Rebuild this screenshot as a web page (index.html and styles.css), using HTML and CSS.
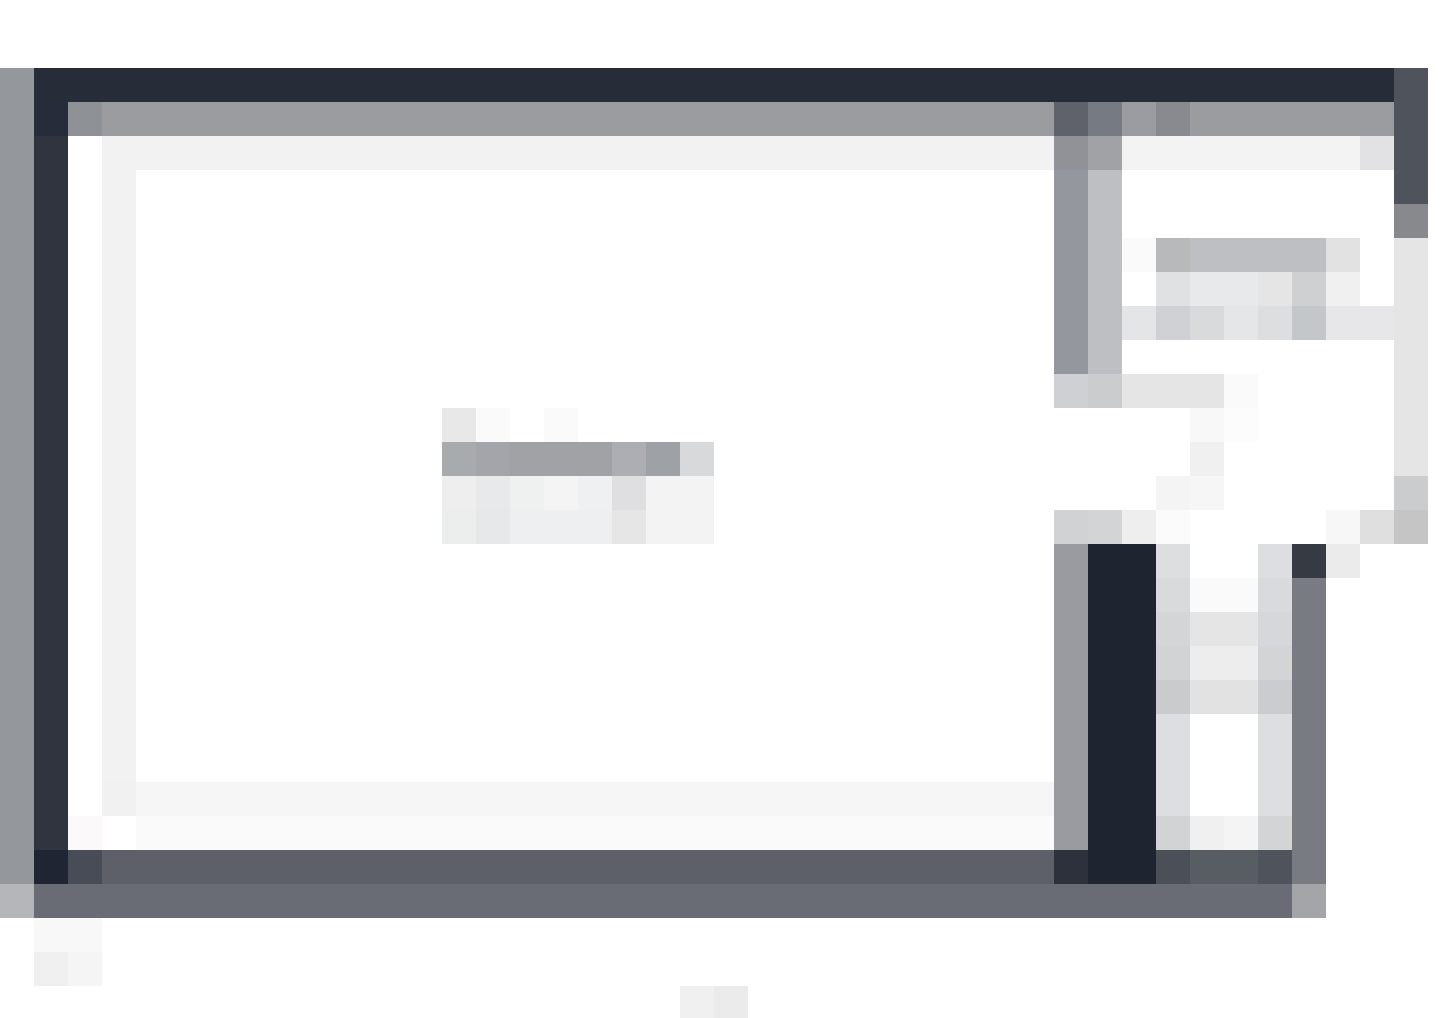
FILE: index.html
```html
<!DOCTYPE html>
<html lang="en">
<head>
<meta charset="utf-8">
<title>Pixelated interface</title>
<link rel="stylesheet" href="styles.css">
</head>
<body>
<main class="mosaic">
  <!-- outer frame -->
  <div class="r2 c0 h24 t-94979c"></div>
  <div class="r26 c0 t-b4b6ba"></div>
  <div class="r2 c1 w40 t-262d39"></div>
  <div class="r2 c41 h4 t-4f545c"></div>
  <div class="r6 c41 t-88898c"></div>
  <div class="r7 c41 h7 t-e5e5e6"></div>
  <div class="r14 c41 t-cbcccd"></div>
  <div class="r15 c41 t-c5c5c6"></div>
  <div class="r3 c1 t-272c3b"></div>
  <div class="r4 c1 h21 t-2f343f"></div>
  <div class="r25 c1 t-1f2533"></div>
  <div class="r26 c1 w37 t-696c74"></div>
  <div class="r26 c38 t-a3a5a8"></div>

  <!-- top strip -->
  <div class="r3 c2 t-8e9196"></div>
  <div class="r3 c3 w28 t-9a9ca0"></div>
  <div class="r3 c31 t-5f626b"></div>
  <div class="r3 c32 t-767a83"></div>
  <div class="r3 c33 t-9a9ca2"></div>
  <div class="r3 c34 t-888a8f"></div>
  <div class="r3 c35 w6 t-9a9ca0"></div>
  <div class="r4 c3 w28 t-f2f2f3"></div>
  <div class="r4 c31 t-909298"></div>
  <div class="r4 c32 t-a0a2a5"></div>
  <div class="r4 c33 w7 t-f3f3f3"></div>
  <div class="r4 c40 t-e2e2e4"></div>

  <!-- main panel edges -->
  <div class="r5 c3 h18 t-f2f2f3"></div>
  <div class="r23 c3 t-f1f1f2"></div>
  <div class="r23 c4 w27 t-f6f6f6"></div>
  <div class="r24 c2 t-fbf9f9"></div>
  <div class="r24 c4 w27 t-fafafa"></div>
  <div class="r25 c2 t-474c56"></div>
  <div class="r25 c3 w28 t-5d6068"></div>

  <!-- panel label -->
  <div class="r12 c13 t-e8e8e8"></div>
  <div class="r12 c14 t-fafafa"></div>
  <div class="r12 c16 t-fafafa"></div>
  <div class="r13 c13 t-a8abad"></div>
  <div class="r13 c14 t-a3a5aa"></div>
  <div class="r13 c15 w3 t-a0a2a6"></div>
  <div class="r13 c18 t-adaeb3"></div>
  <div class="r13 c19 t-9ea1a6"></div>
  <div class="r13 c20 t-d8d9db"></div>
  <div class="r14 c13 t-eeeeef"></div>
  <div class="r14 c14 t-e8e9ea"></div>
  <div class="r14 c15 t-eff0f0"></div>
  <div class="r14 c16 t-f4f4f4"></div>
  <div class="r14 c17 t-eff0f1"></div>
  <div class="r14 c18 t-dfdfe1"></div>
  <div class="r14 c19 w2 t-f3f3f3"></div>
  <div class="r15 c13 t-eceeee"></div>
  <div class="r15 c14 t-e7e8e9"></div>
  <div class="r15 c15 w3 t-eeeff0"></div>
  <div class="r15 c18 t-e6e6e7"></div>
  <div class="r15 c19 w2 t-f3f3f3"></div>

  <!-- divider, upper part -->
  <div class="r5 c31 h6 t-94979e"></div>
  <div class="r5 c32 h6 t-bdbfc3"></div>
  <div class="r11 c31 t-cfd0d3"></div>
  <div class="r11 c32 t-cbccce"></div>
  <div class="r11 c33 w3 t-e5e5e6"></div>
  <div class="r11 c36 t-fafafa"></div>
  <div class="r12 c35 t-f8f8f8"></div>
  <div class="r12 c36 t-fcfcfc"></div>
  <div class="r13 c35 t-f0f0f0"></div>
  <div class="r14 c34 t-f4f4f4"></div>
  <div class="r14 c35 t-f6f6f6"></div>
  <div class="r15 c31 t-d0d2d3"></div>
  <div class="r15 c32 t-d2d4d5"></div>
  <div class="r15 c33 t-eeeeef"></div>
  <div class="r15 c34 t-fbfbfb"></div>
  <div class="r15 c39 t-f7f7f7"></div>
  <div class="r15 c40 t-dfdfdf"></div>

  <!-- side label -->
  <div class="r7 c33 t-fafafa"></div>
  <div class="r7 c34 t-b7b9bb"></div>
  <div class="r7 c35 w4 t-bebfc2"></div>
  <div class="r7 c39 t-e2e2e3"></div>
  <div class="r8 c34 t-e0e1e2"></div>
  <div class="r8 c35 w2 t-e8e9ea"></div>
  <div class="r8 c37 t-e5e5e6"></div>
  <div class="r8 c38 t-cfd0d2"></div>
  <div class="r8 c39 t-f0f0f0"></div>
  <div class="r9 c33 t-e4e5e7"></div>
  <div class="r9 c34 t-cfd1d4"></div>
  <div class="r9 c35 t-d8dadc"></div>
  <div class="r9 c36 t-e4e6e7"></div>
  <div class="r9 c37 t-dcdee0"></div>
  <div class="r9 c38 t-c4c7ca"></div>
  <div class="r9 c39 w2 t-e7e7e9"></div>

  <!-- lower right column -->
  <div class="r16 c31 h9 t-999ba1"></div>
  <div class="r25 c31 t-2c313c"></div>
  <div class="r16 c32 w2 h10 t-1e2430"></div>
  <div class="r16 c34 t-dcdee0"></div>
  <div class="r17 c34 t-d9dadc"></div>
  <div class="r18 c34 t-d3d5d7"></div>
  <div class="r19 c34 t-d1d3d5"></div>
  <div class="r20 c34 t-c9cbcd"></div>
  <div class="r21 c34 h3 t-dcdee1"></div>
  <div class="r24 c34 t-d2d3d5"></div>
  <div class="r25 c34 t-4a4f58"></div>
  <div class="r17 c35 w2 t-fafafa"></div>
  <div class="r18 c35 w2 t-e5e5e5"></div>
  <div class="r19 c35 w2 t-ededed"></div>
  <div class="r20 c35 w2 t-e2e2e2"></div>
  <div class="r24 c35 t-f0f0f0"></div>
  <div class="r24 c36 t-f4f4f4"></div>
  <div class="r25 c35 w2 t-585d64"></div>
  <div class="r16 c37 t-dcdee1"></div>
  <div class="r17 c37 t-d9dadd"></div>
  <div class="r18 c37 t-d6d7da"></div>
  <div class="r19 c37 t-d2d4d6"></div>
  <div class="r20 c37 t-cbcccf"></div>
  <div class="r21 c37 h3 t-dddee1"></div>
  <div class="r24 c37 t-d3d4d6"></div>
  <div class="r25 c37 t-4f535c"></div>
  <div class="r16 c38 t-353a43"></div>
  <div class="r16 c39 t-ebebec"></div>
  <div class="r17 c38 h9 t-797b82"></div>

  <!-- stray marks below the frame -->
  <div class="r27 c1 w2 t-f8f8f8"></div>
  <div class="r28 c1 t-f0f0f0"></div>
  <div class="r28 c2 t-f5f5f5"></div>
  <div class="r29 c20 t-f0f0f0"></div>
  <div class="r29 c21 t-ebebeb"></div>
</main>
</body>
</html>
```
FILE: styles.css
```css
html, body { margin: 0; padding: 0; background: #fff; }
body { height: 1018px; overflow: hidden; }

.mosaic {
  display: grid;
  grid-template-columns: repeat(42, 34px) 12px;
  grid-template-rows: repeat(29, 34px) 32px;
  width: 1440px;
  height: 1018px;
}

/* start rows */
.r2 { grid-row-start: 3; } .r3 { grid-row-start: 4; } .r4 { grid-row-start: 5; }
.r5 { grid-row-start: 6; } .r6 { grid-row-start: 7; } .r7 { grid-row-start: 8; }
.r8 { grid-row-start: 9; } .r9 { grid-row-start: 10; } .r11 { grid-row-start: 12; }
.r12 { grid-row-start: 13; } .r13 { grid-row-start: 14; } .r14 { grid-row-start: 15; }
.r15 { grid-row-start: 16; } .r16 { grid-row-start: 17; } .r17 { grid-row-start: 18; }
.r18 { grid-row-start: 19; } .r19 { grid-row-start: 20; } .r20 { grid-row-start: 21; }
.r21 { grid-row-start: 22; } .r23 { grid-row-start: 24; } .r24 { grid-row-start: 25; }
.r25 { grid-row-start: 26; } .r26 { grid-row-start: 27; } .r27 { grid-row-start: 28; }
.r28 { grid-row-start: 29; } .r29 { grid-row-start: 30; }

/* start columns */
.c0 { grid-column-start: 1; } .c1 { grid-column-start: 2; } .c2 { grid-column-start: 3; }
.c3 { grid-column-start: 4; } .c4 { grid-column-start: 5; } .c13 { grid-column-start: 14; }
.c14 { grid-column-start: 15; } .c15 { grid-column-start: 16; } .c16 { grid-column-start: 17; }
.c17 { grid-column-start: 18; } .c18 { grid-column-start: 19; } .c19 { grid-column-start: 20; }
.c20 { grid-column-start: 21; } .c21 { grid-column-start: 22; } .c31 { grid-column-start: 32; }
.c32 { grid-column-start: 33; } .c33 { grid-column-start: 34; } .c34 { grid-column-start: 35; }
.c35 { grid-column-start: 36; } .c36 { grid-column-start: 37; } .c37 { grid-column-start: 38; }
.c38 { grid-column-start: 39; } .c39 { grid-column-start: 40; } .c40 { grid-column-start: 41; }
.c41 { grid-column-start: 42; }

/* column spans */
.w2 { grid-column-end: span 2; } .w3 { grid-column-end: span 3; } .w4 { grid-column-end: span 4; }
.w6 { grid-column-end: span 6; } .w7 { grid-column-end: span 7; } .w27 { grid-column-end: span 27; }
.w28 { grid-column-end: span 28; } .w37 { grid-column-end: span 37; } .w40 { grid-column-end: span 40; }

/* row spans */
.h3 { grid-row-end: span 3; } .h4 { grid-row-end: span 4; } .h6 { grid-row-end: span 6; }
.h7 { grid-row-end: span 7; } .h9 { grid-row-end: span 9; } .h10 { grid-row-end: span 10; }
.h18 { grid-row-end: span 18; } .h21 { grid-row-end: span 21; } .h24 { grid-row-end: span 24; }

/* tones */
.t-1e2430 { background: #1e2430; } .t-1f2533 { background: #1f2533; } .t-262d39 { background: #262d39; }
.t-272c3b { background: #272c3b; } .t-2c313c { background: #2c313c; } .t-2f343f { background: #2f343f; }
.t-353a43 { background: #353a43; } .t-474c56 { background: #474c56; } .t-4a4f58 { background: #4a4f58; }
.t-4f535c { background: #4f535c; } .t-4f545c { background: #4f545c; } .t-585d64 { background: #585d64; }
.t-5d6068 { background: #5d6068; } .t-5f626b { background: #5f626b; } .t-696c74 { background: #696c74; }
.t-767a83 { background: #767a83; } .t-797b82 { background: #797b82; } .t-888a8f { background: #888a8f; }
.t-88898c { background: #88898c; } .t-8e9196 { background: #8e9196; } .t-909298 { background: #909298; }
.t-94979c { background: #94979c; } .t-94979e { background: #94979e; } .t-999ba1 { background: #999ba1; }
.t-9a9ca0 { background: #9a9ca0; } .t-9a9ca2 { background: #9a9ca2; } .t-9ea1a6 { background: #9ea1a6; }
.t-a0a2a5 { background: #a0a2a5; } .t-a0a2a6 { background: #a0a2a6; } .t-a3a5a8 { background: #a3a5a8; }
.t-a3a5aa { background: #a3a5aa; } .t-a8abad { background: #a8abad; } .t-adaeb3 { background: #adaeb3; }
.t-b4b6ba { background: #b4b6ba; } .t-b7b9bb { background: #b7b9bb; } .t-bdbfc3 { background: #bdbfc3; }
.t-bebfc2 { background: #bebfc2; } .t-c4c7ca { background: #c4c7ca; } .t-c5c5c6 { background: #c5c5c6; }
.t-c9cbcd { background: #c9cbcd; } .t-cbccce { background: #cbccce; } .t-cbcccd { background: #cbcccd; }
.t-cbcccf { background: #cbcccf; } .t-cfd0d2 { background: #cfd0d2; } .t-cfd0d3 { background: #cfd0d3; }
.t-cfd1d4 { background: #cfd1d4; } .t-d0d2d3 { background: #d0d2d3; } .t-d1d3d5 { background: #d1d3d5; }
.t-d2d3d5 { background: #d2d3d5; } .t-d2d4d5 { background: #d2d4d5; } .t-d2d4d6 { background: #d2d4d6; }
.t-d3d4d6 { background: #d3d4d6; } .t-d3d5d7 { background: #d3d5d7; } .t-d6d7da { background: #d6d7da; }
.t-d8d9db { background: #d8d9db; } .t-d8dadc { background: #d8dadc; } .t-d9dadc { background: #d9dadc; }
.t-d9dadd { background: #d9dadd; } .t-dcdee0 { background: #dcdee0; } .t-dcdee1 { background: #dcdee1; }
.t-dddee1 { background: #dddee1; } .t-dfdfdf { background: #dfdfdf; } .t-dfdfe1 { background: #dfdfe1; }
.t-e0e1e2 { background: #e0e1e2; } .t-e2e2e2 { background: #e2e2e2; } .t-e2e2e3 { background: #e2e2e3; }
.t-e2e2e4 { background: #e2e2e4; } .t-e4e5e7 { background: #e4e5e7; } .t-e4e6e7 { background: #e4e6e7; }
.t-e5e5e5 { background: #e5e5e5; } .t-e5e5e6 { background: #e5e5e6; } .t-e6e6e7 { background: #e6e6e7; }
.t-e7e7e9 { background: #e7e7e9; } .t-e7e8e9 { background: #e7e8e9; } .t-e8e8e8 { background: #e8e8e8; }
.t-e8e9ea { background: #e8e9ea; } .t-ebebeb { background: #ebebeb; } .t-ebebec { background: #ebebec; }
.t-eceeee { background: #eceeee; } .t-ededed { background: #ededed; } .t-eeeeef { background: #eeeeef; }
.t-eeeff0 { background: #eeeff0; } .t-eff0f0 { background: #eff0f0; } .t-eff0f1 { background: #eff0f1; }
.t-f0f0f0 { background: #f0f0f0; } .t-f1f1f2 { background: #f1f1f2; } .t-f2f2f3 { background: #f2f2f3; }
.t-f3f3f3 { background: #f3f3f3; } .t-f4f4f4 { background: #f4f4f4; } .t-f5f5f5 { background: #f5f5f5; }
.t-f6f6f6 { background: #f6f6f6; } .t-f7f7f7 { background: #f7f7f7; } .t-f8f8f8 { background: #f8f8f8; }
.t-fafafa { background: #fafafa; } .t-fbf9f9 { background: #fbf9f9; } .t-fbfbfb { background: #fbfbfb; }
.t-fcfcfc { background: #fcfcfc; }
```
